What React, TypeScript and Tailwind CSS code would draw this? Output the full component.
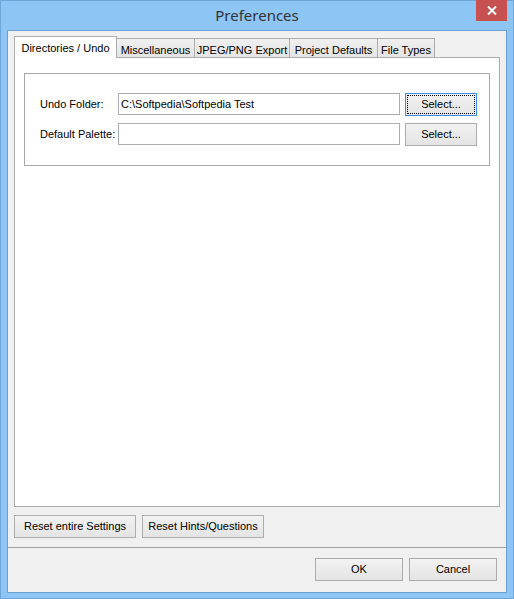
import React from 'react';

const font = { fontFamily: '"Liberation Sans", Arial, sans-serif' };

function Btn({ label, w, focused }: { label: string; w: string; focused?: boolean }) {
  return (
    <button
      className={
        'flex h-[23px] items-center justify-center border bg-linear-to-b from-[#f2f2f2] to-[#e4e4e4] text-[11px] text-black ' +
        w +
        (focused
          ? ' border-[#3c8fe6] outline-1 outline-dotted outline-black -outline-offset-3'
          : ' border-[#acacac]')
      }
    >
      {label}
    </button>
  );
}

function Tab({ label, w, active }: { label: string; w: string; active?: boolean }) {
  if (active) {
    return (
      <div
        className={
          'relative z-20 flex h-[22px] items-start justify-center border border-b-0 border-[#acacac] bg-white pt-[3px] text-[11px] text-black ' +
          w
        }
      >
        {label}
      </div>
    );
  }
  return (
    <div
      className={
        '-ml-px flex h-[20px] items-start justify-center border border-[#acacac] bg-linear-to-b from-[#f0f0f0] to-[#e5e5e5] pt-[3px] text-[11px] text-black ' +
        w
      }
    >
      {label}
    </div>
  );
}

function Row({ label, value, focused }: { label: string; value: string; focused?: boolean }) {
  return (
    <div className="flex h-[22px] items-center">
      <div className="w-[93px] whitespace-nowrap pl-[15px] text-[11px] text-black">{label}</div>
      <div className="flex h-[22px] w-[282px] items-center border border-[#abadb3] bg-white pl-[2px] text-[11px] text-black">
        {value}
      </div>
      <div className="ml-[5px]">
        <Btn label="Select..." w="w-[72px] h-[22px]" focused={focused} />
      </div>
    </div>
  );
}

export default function App() {
  return (
    <div
      className="flex h-[599px] w-[514px] flex-col border border-[#6fa6da] bg-[#8dc5f5]"
      style={font}
    >
      <div className="relative h-[29px] shrink-0">
        <div
          className="flex h-[29px] items-center justify-center pb-[1px] text-[15px] text-[#333333]"
          style={{ fontFamily: '"Noto Sans", "Open Sans", sans-serif' }}
        >
          Preferences
        </div>
        <div className="absolute right-[6px] top-[-1px] flex h-[21px] w-[31px] items-center justify-center bg-[#c75050]">
          <svg width="10" height="9" viewBox="0 0 10 9">
            <path d="M1 0.5 L9 8.5 M9 0.5 L1 8.5" stroke="white" strokeWidth="2" />
          </svg>
        </div>
      </div>

      <div className="mx-[6px] flex h-[563px] shrink-0 flex-col border border-[#6b9fd1] bg-[#f0f0f0]">
        <div className="flex items-end pl-[6px] pt-[5px]">
          <Tab label="Directories / Undo" w="w-[103px]" active />
          <Tab label="Miscellaneous" w="w-[79px]" />
          <Tab label="JPEG/PNG Export" w="w-[96px]" />
          <Tab label="Project Defaults" w="w-[89px]" />
          <Tab label="File Types" w="w-[58px]" />
        </div>
        <div className="relative z-10 -mt-px ml-[6px] h-[450px] w-[486px] border border-[#acacac] bg-white px-[9px] pt-[15px]">
          <div className="flex flex-col gap-[8px] border border-[#a8a8a8] pb-[20px] pt-[19px]">
            <Row label="Undo Folder:" value="C:\Softpedia\Softpedia Test" focused />
            <Row label="Default Palette:" value="" />
          </div>
        </div>

        <div className="mt-[8px] flex gap-[6px] pl-[6px]">
          <Btn label="Reset entire Settings" w="w-[122px]" />
          <Btn label="Reset Hints/Questions" w="w-[122px]" />
        </div>

        <div className="mt-[9px] h-px bg-[#a0a0a0]" />

        <div className="mt-[10px] flex justify-end gap-[6px] pr-[9px]">
          <Btn label="OK" w="w-[88px]" />
          <Btn label="Cancel" w="w-[88px]" />
        </div>
      </div>
    </div>
  );
}
